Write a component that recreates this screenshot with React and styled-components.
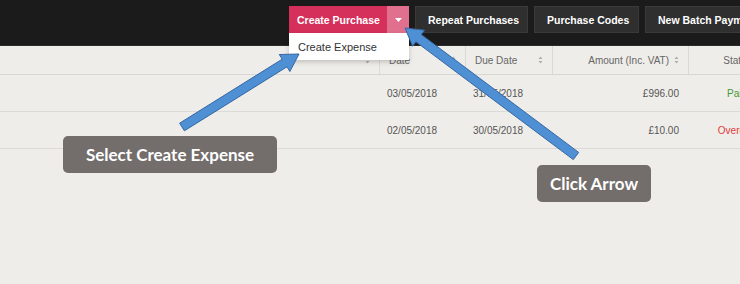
import React from "react";
import styled, { createGlobalStyle } from "styled-components";

const Global = createGlobalStyle`
  html, body { margin: 0; padding: 0; background: #efede9; }
  body { font-family: "Liberation Sans", Arial, sans-serif; overflow: hidden; }
  #root { width: 740px; height: 284px; overflow: hidden; }
`;

const Page = styled.div`
  position: relative;
  width: 740px;
  height: 284px;
  overflow: hidden;
  background: #efede9;
`;

const TopBar = styled.div`
  height: 46px;
  background: #1b1b1b;
  border-bottom: 1px solid #2c2c2c;
  display: flex;
  align-items: flex-start;
  padding: 6px 0 0 289px;
  gap: 6px;
  box-sizing: border-box;
  white-space: nowrap;
`;

const SplitWrap = styled.div`
  position: relative;
  display: flex;
`;

const PrimaryBtn = styled.div`
  height: 27px;
  display: flex;
  align-items: center;
  padding: 0 8px;
  width: 98px;
  box-sizing: border-box;
  background: #d5305b;
  color: #fff;
  font-weight: bold;
  font-size: 10.5px;
`;

const CaretBtn = styled.div`
  width: 22px;
  height: 27px;
  background: #e1708e;
  display: flex;
  align-items: center;
  justify-content: center;
`;

const DarkBtn = styled.div`
  height: 27px;
  display: flex;
  align-items: center;
  padding: 0 12px;
  background: #2f2f2f;
  border: 1px solid #3a3a3a;
  box-sizing: border-box;
  color: #fff;
  font-weight: bold;
  font-size: 10.5px;
  flex-shrink: 0;
  width: ${(p) => p.$w}px;
`;

const Menu = styled.div`
  position: absolute;
  top: 27px;
  left: 0;
  width: 120px;
  height: 27px;
  background: #fff;
  box-shadow: 0 2px 5px rgba(0, 0, 0, 0.2);
  display: flex;
  align-items: center;
  padding-left: 9px;
  box-sizing: border-box;
  font-size: 11px;
  color: #333;
  z-index: 2;
`;

const Table = styled.div`
  display: grid;
  grid-template-columns: 379px 86px 87px 136px 98px;
  width: 786px;
`;

const HeadCell = styled.div`
  height: 29px;
  display: flex;
  align-items: center;
  justify-content: ${(p) => p.$align || "space-between"};
  gap: 5px;
  padding: 0 9px;
  box-sizing: border-box;
  font-size: 10px;
  color: #666;
  border-bottom: 1px solid #d9d7d3;
  border-left: ${(p) => (p.$first ? "none" : "1px solid #dcdad6")};
`;

const Cell = styled.div`
  height: 37px;
  display: flex;
  align-items: center;
  justify-content: ${(p) => p.$align || "flex-start"};
  padding: 0 ${(p) => (p.$align === "flex-end" ? "9px" : "8px")};
  box-sizing: border-box;
  font-size: 10px;
  color: ${(p) => p.$color || "#555"};
  border-bottom: 1px solid #dcdad6;
`;

const Label = styled.div`
  position: absolute;
  left: ${(p) => p.$x}px;
  top: ${(p) => p.$y}px;
  width: ${(p) => p.$w}px;
  height: 37px;
  border-radius: 5px;
  background: #736d6b;
  color: #fff;
  font-family: Lato, "Open Sans", sans-serif;
  font-weight: bold;
  font-size: 17px;
  display: flex;
  align-items: center;
  justify-content: center;
  box-sizing: border-box;
  z-index: 3;
`;

const Overlay = styled.svg`
  position: absolute;
  left: 0;
  top: 0;
  z-index: 4;
  pointer-events: none;
`;

function Sort() {
  return (
    <svg width="5" height="8" viewBox="0 0 5 8">
      <path d="M2.5 0.5 L4.5 3 H0.5 Z M2.5 7.5 L4.5 5 H0.5 Z" fill="#b0aeaa" />
    </svg>
  );
}

function arrowPoints(tx, ty, hx, hy, sw = 4.5, hw = 10, hl = 17) {
  const dx = hx - tx;
  const dy = hy - ty;
  const len = Math.hypot(dx, dy);
  const ux = dx / len;
  const uy = dy / len;
  const nx = -uy;
  const ny = ux;
  const bx = hx - ux * hl;
  const by = hy - uy * hl;
  const pts = [
    [tx + nx * sw, ty + ny * sw],
    [bx + nx * sw, by + ny * sw],
    [bx + nx * hw, by + ny * hw],
    [hx, hy],
    [bx - nx * hw, by - ny * hw],
    [bx - nx * sw, by - ny * sw],
    [tx - nx * sw, ty - ny * sw],
  ];
  return pts.map((p) => p.map((v) => v.toFixed(1)).join(",")).join(" ");
}

const rows = [
  { date: "03/05/2018", due: "31/05/2018", amount: "£996.00", status: "Paid", color: "#3a9a3a" },
  { date: "02/05/2018", due: "30/05/2018", amount: "£10.00", status: "Overdue", color: "#e03a3a" },
];

export default function App() {
  return (
    <Page>
      <Global />
      <TopBar>
        <SplitWrap>
          <PrimaryBtn>Create Purchase</PrimaryBtn>
          <CaretBtn>
            <svg width="7" height="4" viewBox="0 0 7 4">
              <path d="M0 0 H7 L3.5 4 Z" fill="#fff" />
            </svg>
          </CaretBtn>
          <Menu>Create Expense</Menu>
        </SplitWrap>
        <DarkBtn $w={113}>Repeat Purchases</DarkBtn>
        <DarkBtn $w={105}>Purchase Codes</DarkBtn>
        <DarkBtn $w={130}>New Batch Payment</DarkBtn>
      </TopBar>
      <Table>
        <HeadCell $first $align="flex-end">
          <Sort />
        </HeadCell>
        <HeadCell>
          <span>Date</span>
          <Sort />
        </HeadCell>
        <HeadCell>
          <span>Due Date</span>
          <Sort />
        </HeadCell>
        <HeadCell $align="flex-end">
          <span>Amount (Inc. VAT)</span>
          <Sort />
        </HeadCell>
        <HeadCell $align="center">
          <span>Status</span>
        </HeadCell>
        {rows.map((r) => (
          <React.Fragment key={r.date}>
            <Cell />
            <Cell>{r.date}</Cell>
            <Cell>{r.due}</Cell>
            <Cell $align="flex-end">{r.amount}</Cell>
            <Cell $align="center" $color={r.color}>
              {r.status}
            </Cell>
          </React.Fragment>
        ))}
      </Table>
      <Label $x={63} $y={136} $w={214}>
        Select Create Expense
      </Label>
      <Label $x={537} $y={165} $w={114}>
        Click Arrow
      </Label>
      <Overlay width="740" height="284" viewBox="0 0 740 284">
        <polygon
          points={arrowPoints(182, 127, 299, 54)}
          fill="#4f8fd4"
          stroke="#3567a3"
          strokeWidth="1"
          strokeLinejoin="miter"
        />
        <polygon
          points={arrowPoints(576, 156, 405, 28)}
          fill="#4f8fd4"
          stroke="#3567a3"
          strokeWidth="1"
          strokeLinejoin="miter"
        />
      </Overlay>
    </Page>
  );
}
